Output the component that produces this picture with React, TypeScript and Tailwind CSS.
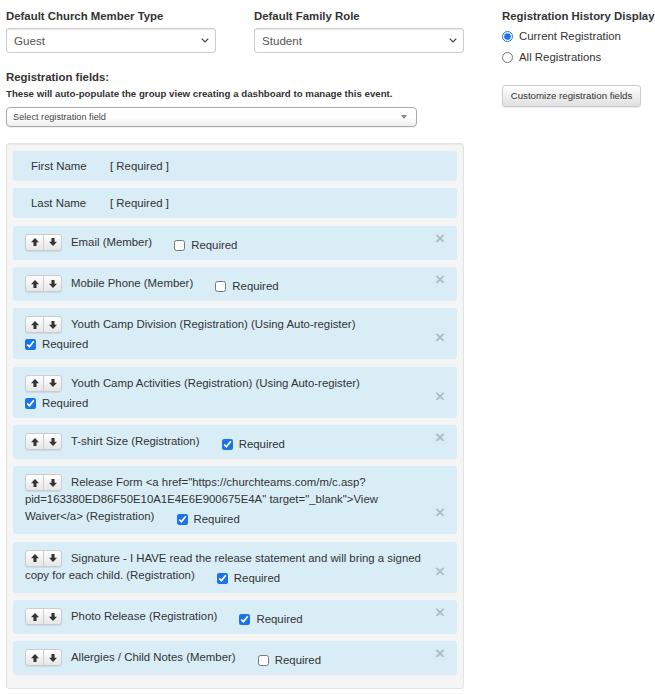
import React from "react";

function Arrow({ down }: { down?: boolean }) {
  return (
    <svg width="8" height="8" viewBox="0 0 10 10" className={down ? "rotate-180" : ""}>
      <path d="M5 0 L10 5.2 H6.9 V10 H3.1 V5.2 H0 Z" fill="#333" />
    </svg>
  );
}

function MoveButtons() {
  return (
    <span className="inline-flex align-top h-[17px] shadow-[0_1px_1px_rgba(0,0,0,0.08)] rounded-[3px]">
      <span className="w-[19px] h-[17px] flex items-center justify-center border border-[#ccc] rounded-l-[3px] bg-[linear-gradient(#fff,#e6e6e6)]">
        <Arrow />
      </span>
      <span className="w-[19px] h-[17px] -ml-px flex items-center justify-center border border-[#ccc] rounded-r-[3px] bg-[linear-gradient(#fff,#e6e6e6)]">
        <Arrow down />
      </span>
    </span>
  );
}

function Req({ checked }: { checked: boolean }) {
  return (
    <span className="inline-block align-top h-[20px] pt-[3px]">
      <span className="flex items-center h-[17px]">
        <input
          type="checkbox"
          defaultChecked={checked}
          className="w-[11px] h-[11px] m-0 accent-[#1a73e8]"
        />
        <span className="ml-[6px]">Required</span>
      </span>
    </span>
  );
}

type Field = { label: React.ReactNode; checked: boolean };

const fields: Field[] = [
  { label: "Email (Member)", checked: false },
  { label: "Mobile Phone (Member)", checked: false },
  { label: "Youth Camp Division (Registration) (Using Auto-register)", checked: true },
  { label: "Youth Camp Activities (Registration) (Using Auto-register)", checked: true },
  { label: "T-shirt Size (Registration)", checked: true },
  {
    label: (
      <>
        Release Form &lt;a href="https://churchteams.com/m/c.asp?<wbr />pid=163380ED86F50E10A1E4E6E900675E4A" target="_blank"&gt;View Waiver&lt;/a&gt; (Registration)
      </>
    ),
    checked: true,
  },
  {
    label: "Signature - I HAVE read the release statement and will bring a signed copy for each child. (Registration)",
    checked: true,
  },
  { label: "Photo Release (Registration)", checked: true },
  { label: "Allergies / Child Notes (Member)", checked: false },
];

function FieldItem({ f }: { f: Field }) {
  return (
    <div className="flex bg-[#d9edf7] rounded-[3px] pl-[12px] pr-[12px] pt-[8px] pb-[6px]">
      <div className="flex-1 leading-[17px]">
        <MoveButtons />
        <span className="ml-[9px] mr-[19px]">{f.label}</span> <Req checked={f.checked} />
      </div>
      <span className="self-end shrink-0 ml-[6px] mb-[10px] w-[10px] h-[10px] text-[17px] leading-[10px] font-bold text-black opacity-20 [text-shadow:0_1px_0_#fff]">
        ×
      </span>
    </div>
  );
}

function FakeSelect({ value }: { value: string }) {
  return (
    <div className="h-[25px] border border-[#ccc] rounded-[3px] bg-white flex items-center justify-between pl-[7px] pr-[6px] text-[#555] shadow-[inset_0_1px_1px_rgba(0,0,0,0.075)]">
      <span className="text-[11.6px]">{value}</span>
      <svg width="8" height="5" viewBox="0 0 8 5">
        <path d="M0.7 0.7 L4 4 L7.3 0.7" stroke="#444" strokeWidth="1.2" fill="none" />
      </svg>
    </div>
  );
}

export default function App() {
  return (
    <div className="font-['Liberation_Sans',Arial,sans-serif] text-[11.4px] leading-[16px] text-[#333] bg-white min-h-[695px] pl-[6px] pt-[8px]">
      <div className="flex">
        <div className="w-[459px]">
          <div className="flex gap-[38px]">
            <div className="w-[210px]">
              <div className="font-bold mb-[4px]">Default Church Member Type</div>
              <FakeSelect value="Guest" />
            </div>
            <div className="w-[210px]">
              <div className="font-bold mb-[4px]">Default Family Role</div>
              <FakeSelect value="Student" />
            </div>
          </div>
          <div className="font-bold mt-[16px]">Registration fields:</div>
          <div className="font-bold text-[9.7px] leading-[12px] mt-[3px]">
            These will auto-populate the group view creating a dashboard to manage this event.
          </div>
          <div className="mt-[7px] w-[411px] h-[20px] border border-[#aaa] rounded-[4px] bg-[linear-gradient(#fff_50%,#eee)] flex items-center justify-between pl-[6px] pr-[9px] text-[9.2px] text-[#444] shadow-[0_1px_0_rgba(0,0,0,0.05)]">
            <span>Select registration field</span>
            <svg width="6" height="4" viewBox="0 0 6 4">
              <path d="M0 0 H6 L3 4 Z" fill="#888" />
            </svg>
          </div>
          <div className="mt-[16px] w-[458px] border border-[#e3e3e3] bg-[#f5f5f5] rounded-[3px] shadow-[inset_0_1px_1px_rgba(0,0,0,0.05)] px-[6px] pt-[7px] pb-[13px] flex flex-col gap-[7.35px]">
            <div className="flex bg-[#d9edf7] rounded-[3px] pl-[18px] py-[7px]">
              <span className="w-[79px]">First Name</span>
              <span>[ Required ]</span>
            </div>
            <div className="flex bg-[#d9edf7] rounded-[3px] pl-[18px] py-[7px]">
              <span className="w-[79px]">Last Name</span>
              <span>[ Required ]</span>
            </div>
            {fields.map((f, i) => (
              <FieldItem key={i} f={f} />
            ))}
          </div>
        </div>
        <div className="ml-[37px]">
          <div className="font-bold">Registration History Display</div>
          <label className="flex items-center mt-[4px]">
            <input type="radio" name="hist" defaultChecked className="w-[11px] h-[11px] m-0 accent-[#1a73e8]" />
            <span className="ml-[6px]">Current Registration</span>
          </label>
          <label className="flex items-center mt-[5px]">
            <input type="radio" name="hist" className="w-[11px] h-[11px] m-0" />
            <span className="ml-[6px]">All Registrations</span>
          </label>
          <div className="mt-[20px] w-[139px] h-[22px] border border-[#ccc] rounded-[3px] bg-[linear-gradient(#fff,#e0e0e0)] flex items-center justify-center text-[9.7px] text-[#333] shadow-[0_1px_1px_rgba(0,0,0,0.08)]">
            Customize registration fields
          </div>
        </div>
      </div>
    </div>
  );
}
